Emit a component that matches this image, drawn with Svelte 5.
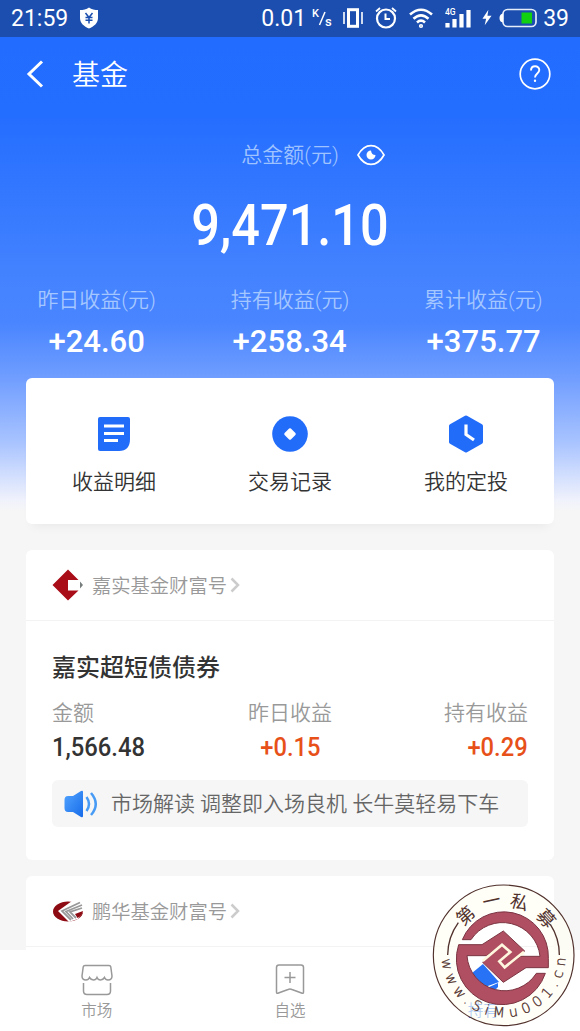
<script>
  const stats = [
    { label: '昨日收益(元)', value: '+24.60' },
    { label: '持有收益(元)', value: '+258.34' },
    { label: '累计收益(元)', value: '+375.77' }
  ];

  const actions = [
    { icon: 'detail', label: '收益明细' },
    { icon: 'record', label: '交易记录' },
    { icon: 'plan', label: '我的定投' }
  ];

  const tabs = [
    { icon: 'market', label: '市场' },
    { icon: 'favorite', label: '自选' },
    { icon: 'hold', label: '持有', active: true }
  ];
</script>

<div class="page">
  <div class="status-bar">
    <span>21:59</span>
    <svg class="shield" width="20" height="22" viewBox="0 0 20 22">
      <path d="M10 0.5 C7.5 2.5 4 3 1 3 V11 C1 16 5 19.5 10 21.5 C15 19.5 19 16 19 11 V3 C16 3 12.5 2.5 10 0.5Z" fill="#fff" />
      <path d="M6.5 6 L10 10.5 L13.5 6 M10 10.5 V16.5 M6.5 10.5 H13.5 M6.5 13.3 H13.5" fill="none" stroke="#1b4eae" stroke-width="1.5" />
    </svg>
    <span class="speed">0.01</span>
    <svg class="unit" width="20" height="20" viewBox="0 0 20 20">
      <text x="0" y="9" font-size="11">K</text>
      <path d="M7.5 17 L13 4" stroke="#fff" stroke-width="1.5" />
      <text x="13" y="18" font-size="13">s</text>
    </svg>
    <svg class="vibrate" width="20" height="20" viewBox="0 0 20 20">
      <path d="M1 4 V16 M19 4 V16" stroke="#fff" stroke-width="1.6" />
      <rect x="5.5" y="1.7" width="9" height="16.6" fill="none" stroke="#fff" stroke-width="3" />
    </svg>
    <svg class="alarm" width="22" height="22" viewBox="0 0 22 22" fill="none" stroke="#fff">
      <circle cx="11" cy="11.500" r="9" stroke-width="2.2" />
      <path d="M10.5 6.500 V12 H15" stroke-width="2" />
      <path d="M1 4.500 L5 1 M21 4.500 L17 1" stroke-width="1.8" />
    </svg>
    <svg class="wifi" width="24" height="22" viewBox="1 0 24 22" fill="none" stroke="#fff" stroke-width="2.6">
      <path d="M2 7.500 Q13 -2 24 7.500 M5.500 11.800 Q13 5 20.500 11.800 M9 15.500 Q13 11.800 17 15.500" />
      <circle cx="13" cy="19" r="0.8" />
    </svg>
    <svg class="signal" width="26" height="22" viewBox="0 0 26 22">
      <text x="0" y="8" font-size="8.500">4G</text>
      <path d="M2.500 16 V20.500 M9.500 12 V20.500 M16.500 7 V20.500 M23.500 3 V20.500" stroke="#fff" stroke-width="4.2" />
    </svg>
    <svg class="bolt" width="10" height="17" viewBox="0 0 11 17">
      <path d="M7 0 L0.500 10 H4.500 L3 17 L10.500 6.500 H6Z" fill="#fff" />
    </svg>
    <svg class="battery" width="38" height="20" viewBox="0 0 38 20">
      <rect x="4" y="1.500" width="33" height="17" rx="4.500" fill="none" stroke="#e6edfa" stroke-width="1.700" />
      <path d="M4 5.500 Q0.500 6 0.500 10 Q0.500 14 4 14.500Z" fill="#fff" />
      <rect x="22.500" y="4.500" width="10.500" height="11" fill="#10d010" />
    </svg>
    <span>39</span>
  </div>

  <main>
    <header>
      <svg width="18" height="28" viewBox="0 0 18 28">
        <path d="M16 1.500 L3 14 L16 26.500" fill="none" stroke="#fff" stroke-width="3" />
      </svg>
      <h1>基金</h1>
      <svg class="help" width="32" height="32" viewBox="0 0 32 32" fill="none" stroke="#fff">
        <circle cx="16" cy="16" r="14.800" stroke-width="1.700" />
        <path d="M12 12.500 C12 6.800 20.300 7 20.300 12 C20.300 15.500 16 15.500 16 19.500" stroke-width="1.900" />
        <circle cx="16" cy="22.800" r="0.600" stroke-width="1.200" />
      </svg>
    </header>

    <section class="total">
      <div class="total-label">
        <span>总金额(元)</span>
        <svg width="28" height="22" viewBox="0 0 28 22">
          <path d="M1 11 C8 -1.500 20 -1.500 27 11 C20 23.500 8 23.500 1 11Z" fill="none" stroke="#fff" stroke-width="1.700" />
          <path d="M14 6.500 A4.500 4.500 0 1 0 18.500 11 Q14.500 11 14 6.500Z" fill="#fff" />
        </svg>
      </div>
      <div class="total-value">9,471.10</div>
    </section>

    <section class="stats">
      {#each stats as stat}
        <div>
          <p>{stat.label}</p>
          <strong>{stat.value}</strong>
        </div>
      {/each}
    </section>

    <section class="actions">
      {#each actions as action}
        <div class="action">
          <svg width="38" height="38" viewBox="0 0 38 38">
            {#if action.icon === 'detail'}
              <path d="M5 2 H33 Q35 2 35 4 V24 Q35 36 24 36 H5 Q3 36 3 34 V4 Q3 2 5 2Z" fill="#226cfa" />
              <path d="M9 11 H29 M9 18.500 H29 M9 25.500 H23" stroke="#fff" stroke-width="3.200" />
            {:else if action.icon === 'record'}
              <circle cx="19" cy="19" r="17.800" fill="#226cfa" />
              <path d="M19 14.500 L23.500 19 L19 23.500 L14.500 19Z" fill="#fff" stroke="#fff" stroke-width="2.500" stroke-linejoin="round" />
            {:else}
              <path d="M19 2.500 L34 11 V27 L19 35.500 L4 27 V11Z" fill="#226cfa" stroke="#226cfa" stroke-width="4" stroke-linejoin="round" />
              <path d="M19 9.500 V19.500 L27 25" fill="none" stroke="#fff" stroke-width="3.200" />
            {/if}
          </svg>
          <span>{action.label}</span>
        </div>
      {/each}
    </section>

    <section class="fund">
      <div class="fund-head">
        <svg width="32" height="32" viewBox="0 0 32 32">
          <path d="M16 0.500 L26.500 11 H16 V21.500 H26.500 L16 31.500 L0.500 16Z" fill="#a90e18" />
          <path d="M28 12.500 L31 16 L28 19.500Z" fill="#777c7c" />
        </svg>
        <span>嘉实基金财富号</span>
        <svg class="arrow" width="10" height="16" viewBox="0 0 10 16"><path d="M1.500 1.500 L8 8 L1.500 14.500" /></svg>
      </div>
      <div class="fund-body">
        <h2>嘉实超短债债券</h2>
        <div class="figures">
          <div>
            <p>金额</p>
            <strong>1,566.48</strong>
          </div>
          <div>
            <p>昨日收益</p>
            <strong class="up">+0.15</strong>
          </div>
          <div>
            <p>持有收益</p>
            <strong class="up">+0.29</strong>
          </div>
        </div>
        <div class="notice">
          <svg width="34" height="28" viewBox="0 0 34 28">
            <defs>
              <linearGradient id="horn" x1="0" y1="0" x2="1" y2="1">
                <stop offset="0" stop-color="#52a5ff" />
                <stop offset="1" stop-color="#176be9" />
              </linearGradient>
            </defs>
            <path d="M4 6 H9 L17 1 Q19 0 19 2 V26 Q19 28 17 27 L9 22 H4 Q0.500 22 0.500 18 V10 Q0.500 6 4 6Z" fill="url(#horn)" />
            <path d="M22.500 7 Q27.500 14 22.500 21 M27 3 Q36.500 14 27 25" fill="none" stroke="#489bf5" stroke-width="2.500" />
          </svg>
          <span>市场解读 调整即入场良机 长牛莫轻易下车</span>
        </div>
      </div>
    </section>

    <section class="fund">
      <div class="fund-head">
        <svg width="32" height="32" viewBox="0 0 32 32">
          <ellipse cx="16" cy="16.500" rx="15" ry="10" fill="#8d0b13" />
          <path d="M32 6 L20 6 L6 16 L17 27 L26 24 L31 17Z" fill="#fff" />
          <path d="M28 7.500 L10 16 L19 25 M30 10 L14 16.500 L21 24 M30 13 L18 17 L24 23" fill="none" stroke="#999" stroke-width="1.800" />
          <path d="M31 16 Q30 21 25.500 23 L23 19Z" fill="#8d0b13" />
        </svg>
        <span>鹏华基金财富号</span>
        <svg class="arrow" width="10" height="16" viewBox="0 0 10 16"><path d="M1.500 1.500 L8 8 L1.500 14.500" /></svg>
      </div>
    </section>
  </main>

  <nav>
    {#each tabs as tab}
      <div class="tab" class:active={tab.active}>
        <svg width="32" height="32" viewBox="0 0 32 32" fill="none" stroke="#999" stroke-width="1.500">
          {#if tab.icon === 'market'}
            <path d="M4 1.500 H28 Q29.500 1.500 29.800 3 L31 12 Q31 16 27 16 Q24.500 16 23.500 13.500 Q22 16 19.500 16 Q17 16 16 13.500 Q15 16 12.500 16 Q10 16 8.500 13.500 Q7.500 16 5 16 Q1 16 1 12 L2.200 3 Q2.500 1.500 4 1.500Z" />
            <path d="M2.500 19 V27 Q2.500 30.500 6 30.500 H26 Q29.500 30.500 29.500 27 V19" />
          {:else if tab.icon === 'favorite'}
            <path d="M5 1 H27 Q29.500 1 29.500 3.500 V28 Q29.500 30 27.500 29 L18 25.500 Q16 24.500 14 25.500 L4.500 29 Q2.500 30 2.500 28 V3.500 Q2.500 1 5 1Z" />
            <path d="M16 8 V19 M10.500 13.500 H21.500" />
          {:else}
            <path d="M5 9 L16 0 L32 18 L18 23 Q9 20 5 9Z" fill="#2872f5" stroke="none" />
            <path d="M20 24 L31 19 L31 23 Q27 28 23 27Z" fill="#2872f5" stroke="none" />
          {/if}
        </svg>
        <span>{tab.label}</span>
      </div>
    {/each}
  </nav>

  <!-- round seal over the corner of the page -->
  <svg class="seal" width="160" height="156" viewBox="0 0 480 468">
    <circle cx="251" cy="241" r="172" fill="none" stroke="#fffdf2" stroke-width="76" opacity="0.65" />
    <circle cx="251" cy="241" r="211" fill="none" stroke="#51312c" stroke-width="3.500" />
    <path d="M83 240 A168 168 0 0 1 115 143 M418 240 A168 168 0 0 0 391 148" fill="none" stroke="#51312c" stroke-width="4" />
    <g class="seal-name">
      <text transform="translate(137 122) rotate(-42)">第</text>
      <text transform="translate(214 77) rotate(-12)">一</text>
      <text transform="translate(298 82) rotate(16)">私</text>
      <text transform="translate(378 130) rotate(48)">募</text>
    </g>
    <path d="M190 262 L200 240 L251 200 L315 238 L310 278 L251 324Z" fill="#fffdf2" />
    <g fill="#b04f61" stroke="#7b3542" stroke-width="3">
      <path d="M127 194 A134 134 0 0 1 385 250 V278 H318 L250 322 L188 262 L246 209 L270 231 L237 258 L253 277 L302 244 H360 A113 113 0 0 0 153 194Z" />
      <path d="M376 295 A134 134 0 0 1 116 209 H186 L250 168 L314 228 L256 277 L240 260 L273 231 L247 207 L200 242 H141 A113 113 0 0 0 349 295Z" />
    </g>
    <path d="M188 258 L246 209 L271 231 L238 259 L254 277 L312 230" fill="none" stroke="#fff8df" stroke-width="8" />
    <path id="seal-arc" d="M65 241 A186 186 0 0 0 437 241" fill="none" />
    <text class="seal-url"><textPath href="#seal-arc" startOffset="12" textLength="564">www.SiMu001.cn</textPath></text>
  </svg>
</div>

<style>
  :global(body) {
    margin: 0;
  }

  .page {
    position: relative;
    display: flex;
    flex-direction: column;
    width: 580px;
    height: 1031px;
    overflow: hidden;
    background: #f6f6f6;
    color: #333;
    font-family: Roboto, "Noto Sans CJK SC", sans-serif;
    font-weight: 350;
  }

  h1, h2, p {
    margin: 0;
    font-weight: 350;
  }

  svg {
    display: block;
    flex: none;
  }

  /* status bar */
  .status-bar {
    display: flex;
    align-items: center;
    box-sizing: border-box;
    height: 37px;
    flex: none;
    padding: 0 11px 0;
    background: #1b4eae;
    color: #fff;
    font-size: 23px;
    font-weight: 400;
  }

  .status-bar text {
    fill: #fff;
    font-weight: 500;
  }

  .status-bar svg {
    margin-bottom: 2px;
  }

  .status-bar .shield {
    margin-left: 11px;
  }

  .speed {
    margin-left: auto;
  }

  .unit {
    margin-left: 6px;
  }

  .vibrate {
    margin-left: 11px;
  }

  .alarm {
    margin-left: 12px;
  }

  .wifi {
    margin-left: 12px;
  }

  .signal {
    margin-left: 12px;
  }

  .bolt {
    margin-left: 11px;
  }

  .battery {
    margin: 0 6px 0 7px;
  }

  main {
    flex: 1;
    min-height: 0;
    overflow: hidden;
    background: linear-gradient(#226cff 0, #236dff 75px, #4382ff 235px, #4985ff 285px, #6f9dff 340px, #a8c3ff 405px, #f0f2fc 463px, #f6f6f6 474px);
  }

  header {
    display: flex;
    align-items: center;
    height: 74px;
    padding: 0 29px 0 26px;
  }

  h1 {
    margin: 3px 0 0 28px;
    color: #fff;
    font-size: 28px;
    line-height: 40px;
  }

  .help {
    margin-left: auto;
  }

  .total {
    height: 171px;
    box-sizing: border-box;
    padding-top: 29px;
    text-align: center;
  }

  .total-label {
    display: flex;
    align-items: center;
    justify-content: center;
    gap: 18px;
    height: 30px;
    margin-left: 46px;
    color: #9fc3ff;
    font-size: 21px;
  }

  .total-label span {
    margin-bottom: 4px;
  }

  .total-value {
    margin-top: 20px;
    color: #fff;
    font-size: 58px;
    font-weight: 500;
    line-height: 70px;
    transform: scaleX(0.87);
  }

  .stats {
    display: flex;
    height: 96px;
    color: #fff;
    text-align: center;
  }

  .stats div {
    flex: 1;
  }

  .stats p {
    height: 36px;
    color: #a5c7ff;
    font-size: 21px;
    line-height: 37px;
  }

  .stats strong {
    display: block;
    font-size: 32px;
    font-weight: 500;
    line-height: 46px;
    transform: scaleX(0.97);
  }

  .actions {
    display: flex;
    height: 146px;
    margin: 0 26px;
    border-radius: 6px;
    background: #fff;
    box-shadow: 0 8px 10px -6px rgba(0, 0, 0, 0.06);
  }

  .action {
    display: flex;
    flex: 1;
    flex-direction: column;
    align-items: center;
    padding-top: 37px;
    font-size: 21px;
  }

  .action span {
    margin-top: 14px;
    line-height: 30px;
  }

  /* fund cards */
  .fund {
    height: 310px;
    margin: 26px 26px 0;
    border-radius: 6px;
    background: #fff;
  }

  .fund + .fund {
    margin-top: 16px;
  }

  .fund-head {
    display: flex;
    align-items: center;
    box-sizing: border-box;
    height: 71px;
    padding-left: 26px;
    border-bottom: 1px solid #f3f3f3;
    color: #999;
    font-size: 19.3px;
  }

  .fund-head span {
    margin-left: 8px;
  }

  .arrow {
    margin-left: 3px;
    fill: none;
    stroke: #ccc;
    stroke-width: 2.5;
  }

  .fund-body {
    padding: 29px 26px 0;
  }

  h2 {
    font-size: 24px;
    font-weight: 500;
    line-height: 36px;
  }

  .figures {
    display: grid;
    grid-template-columns: 1fr 1fr 1fr;
    margin-top: 11px;
    text-align: center;
  }

  .figures div:first-child {
    text-align: left;
  }

  .figures div:last-child {
    text-align: right;
  }

  .figures p {
    color: #999;
    font-size: 21px;
    line-height: 32px;
  }

  .figures strong {
    display: block;
    font-size: 25px;
    font-weight: 500;
    line-height: 37px;
    transform: scaleX(0.95);
  }

  .figures div:first-child strong {
    transform-origin: left;
  }

  .figures div:last-child strong {
    transform-origin: right;
  }

  .figures .up {
    color: #e75119;
  }

  .notice {
    display: flex;
    align-items: center;
    gap: 13px;
    height: 47px;
    margin-top: 14px;
    padding-left: 12px;
    border-radius: 6px;
    background: #f6f6f6;
    color: #666;
    font-size: 21px;
    white-space: nowrap;
  }

  .notice span {
    margin-bottom: 4px;
  }

  /* bottom tabs */
  nav {
    display: flex;
    height: 81px;
    flex: none;
    background: #fff;
  }

  .tab {
    display: flex;
    flex: 1;
    flex-direction: column;
    align-items: center;
    padding-top: 14px;
    color: #999;
    font-size: 15.5px;
  }

  .tab span {
    margin-top: 4px;
    line-height: 23px;
  }

  .tab.active {
    color: #2872f5;
  }

  .seal {
    position: absolute;
    right: 0;
    bottom: 0;
  }

  .seal-name text {
    fill: #51312c;
    font-size: 54px;
    font-weight: 400;
    text-anchor: middle;
    dominant-baseline: central;
  }

  .seal-url {
    fill: #51312c;
    font-family: "DejaVu Sans", sans-serif;
    font-size: 42px;
    stroke: #51312c;
    stroke-width: 1;
  }
</style>
